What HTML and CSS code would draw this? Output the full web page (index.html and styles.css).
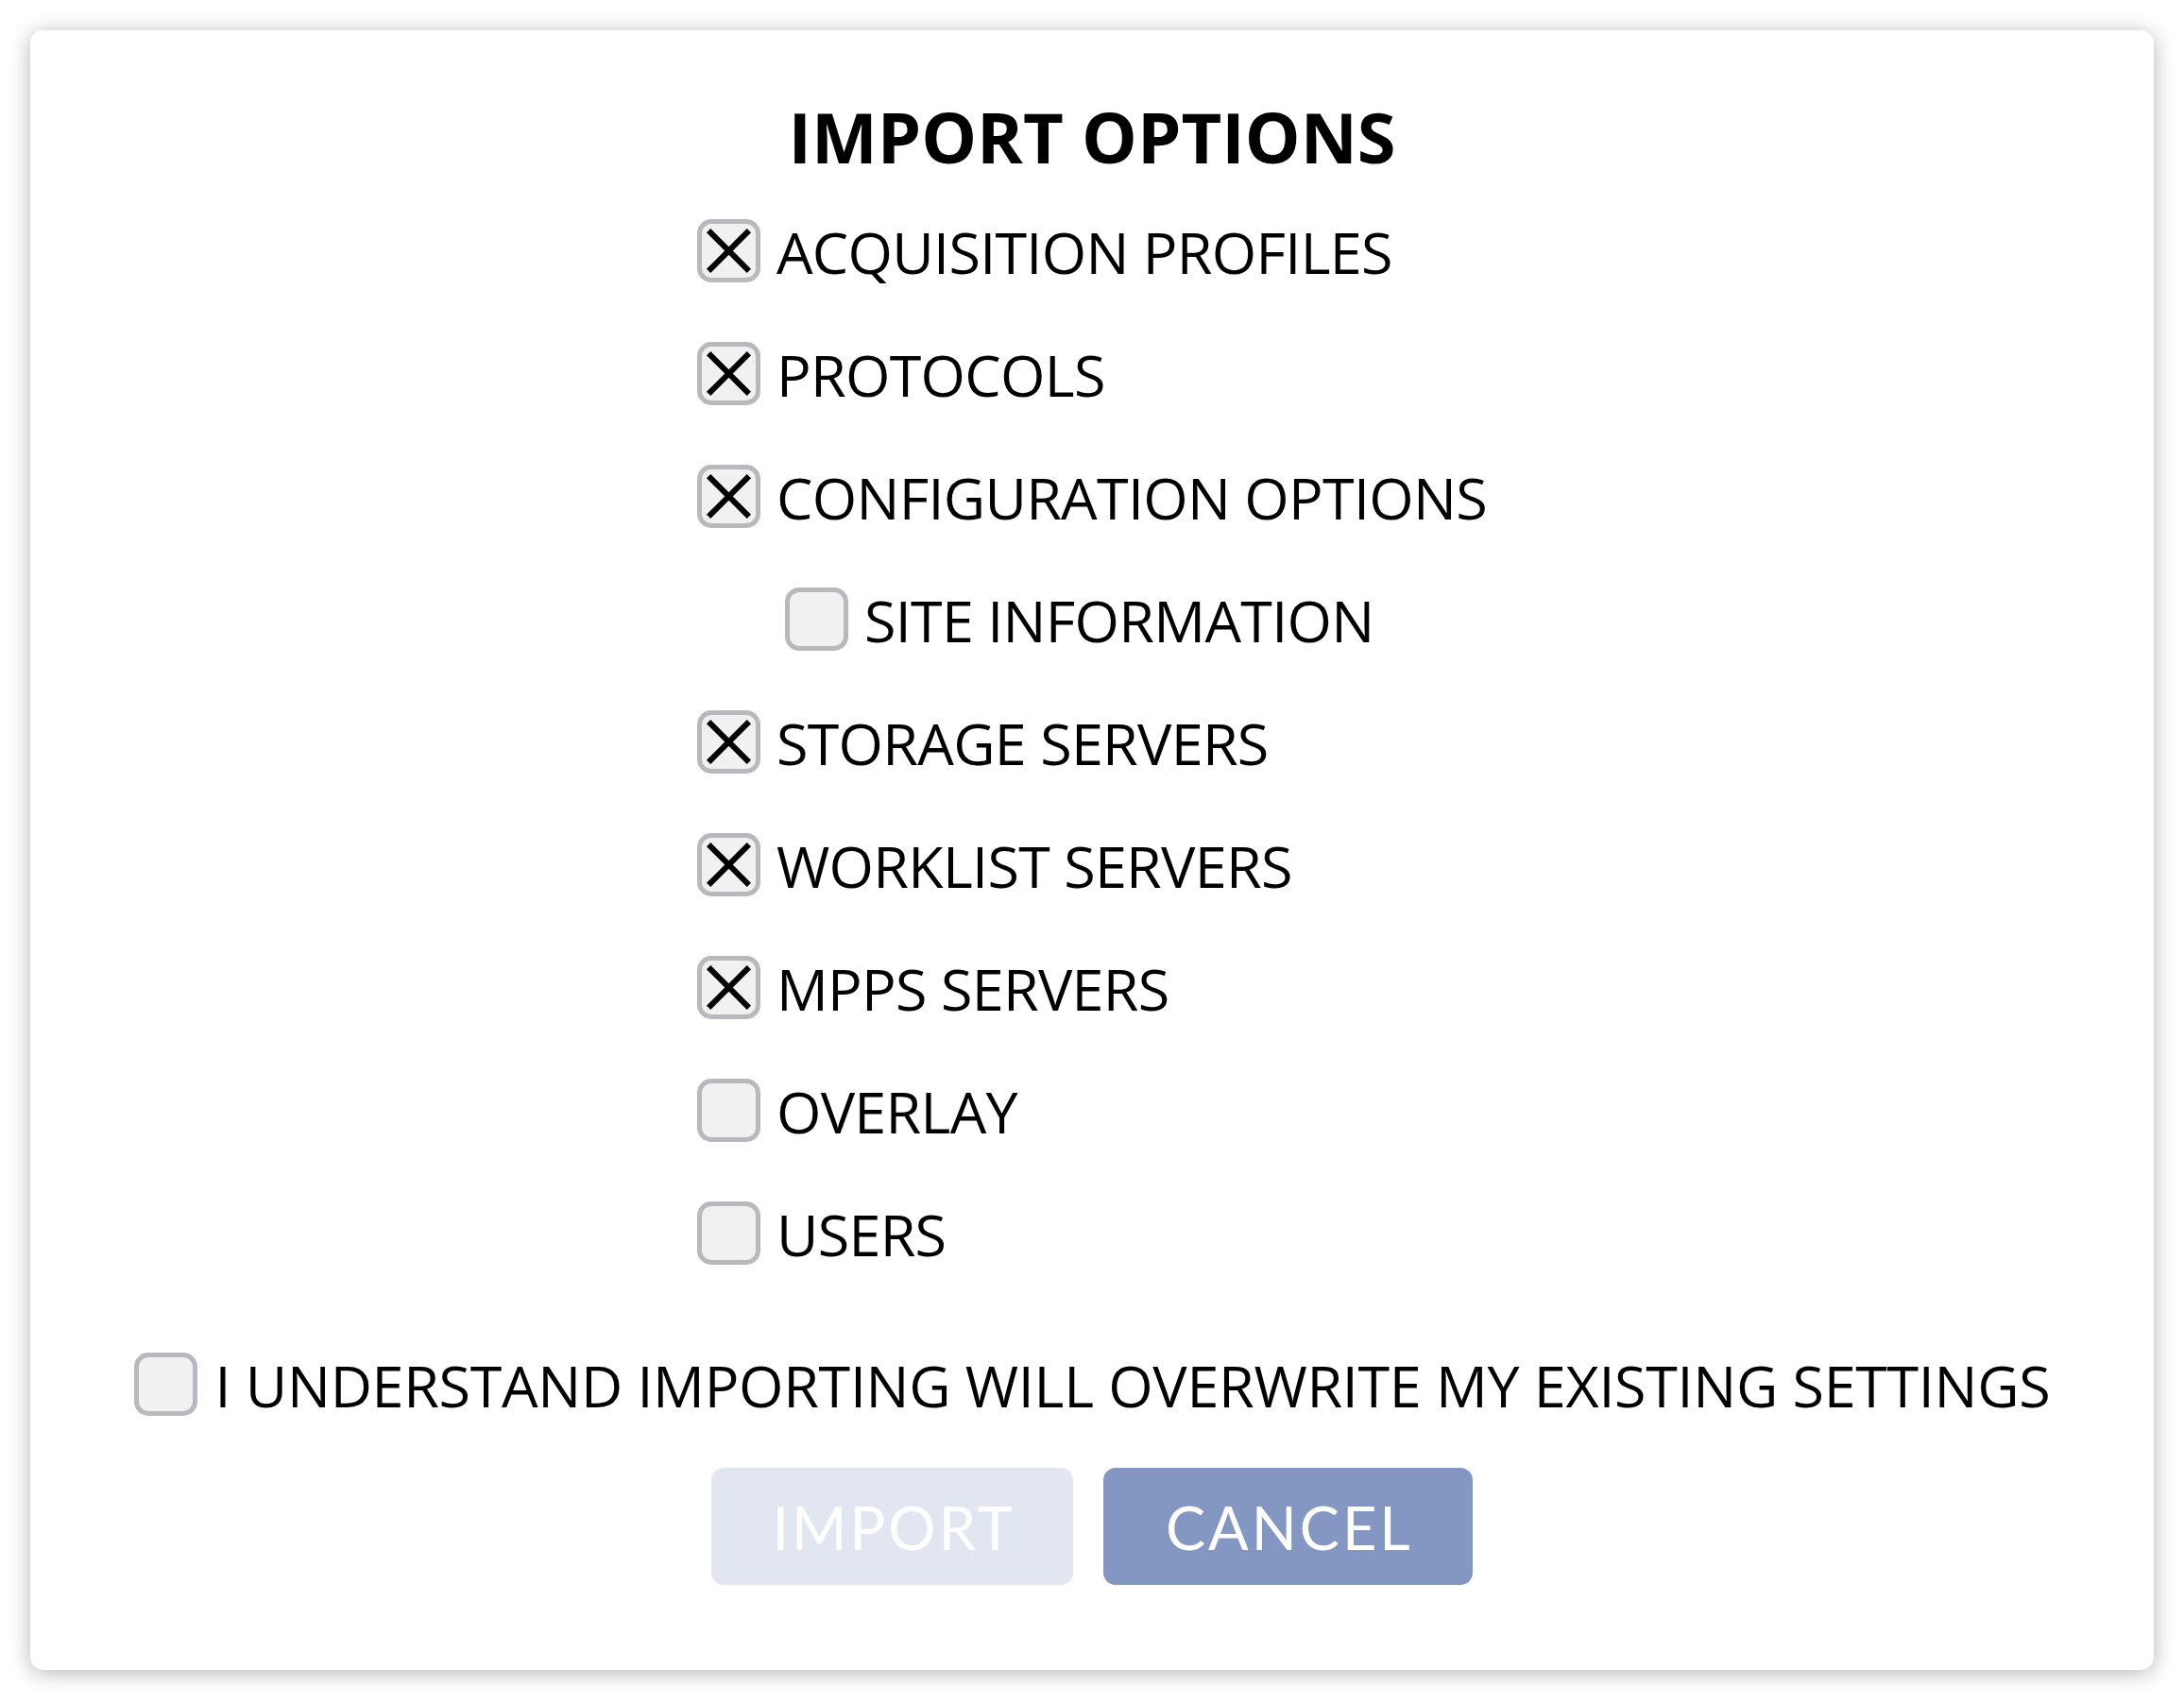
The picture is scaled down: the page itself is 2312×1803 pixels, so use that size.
FILE: index.html
```html
<!DOCTYPE html>
<html lang="en">
<head>
    <meta charset="UTF-8">
    <meta name="viewport" content="width=device-width, initial-scale=1.0">
    <title>Import Options</title>
    <link rel="stylesheet" href="styles.css">
</head>
<body>
    <div class="dialog">
        <h1 class="title">IMPORT OPTIONS</h1>

        <div class="options">
            <label class="option">
                <span class="box"><svg viewBox="0 0 56 56"><path d="M7 7 L49 49 M49 7 L7 49"/></svg></span>
                <span class="text">ACQUISITION PROFILES</span>
            </label>
            <label class="option">
                <span class="box"><svg viewBox="0 0 56 56"><path d="M7 7 L49 49 M49 7 L7 49"/></svg></span>
                <span class="text">PROTOCOLS</span>
            </label>
            <label class="option">
                <span class="box"><svg viewBox="0 0 56 56"><path d="M7 7 L49 49 M49 7 L7 49"/></svg></span>
                <span class="text">CONFIGURATION OPTIONS</span>
            </label>
            <label class="option sub">
                <span class="box"></span>
                <span class="text">SITE INFORMATION</span>
            </label>
            <label class="option">
                <span class="box"><svg viewBox="0 0 56 56"><path d="M7 7 L49 49 M49 7 L7 49"/></svg></span>
                <span class="text">STORAGE SERVERS</span>
            </label>
            <label class="option">
                <span class="box"><svg viewBox="0 0 56 56"><path d="M7 7 L49 49 M49 7 L7 49"/></svg></span>
                <span class="text">WORKLIST SERVERS</span>
            </label>
            <label class="option">
                <span class="box"><svg viewBox="0 0 56 56"><path d="M7 7 L49 49 M49 7 L7 49"/></svg></span>
                <span class="text">MPPS SERVERS</span>
            </label>
            <label class="option">
                <span class="box"></span>
                <span class="text">OVERLAY</span>
            </label>
            <label class="option">
                <span class="box"></span>
                <span class="text">USERS</span>
            </label>
        </div>

        <label class="option confirm">
            <span class="box"></span>
            <span class="text">I UNDERSTAND IMPORTING WILL OVERWRITE MY EXISTING SETTINGS</span>
        </label>

        <div class="actions">
            <button class="btn disabled">IMPORT</button>
            <button class="btn primary">CANCEL</button>
        </div>
    </div>
</body>
</html>
```

FILE: styles.css
```css
* {
    margin: 0;
    padding: 0;
    box-sizing: border-box;
}

body {
    background: #ffffff;
    padding: 32px 32px 35px;
    font-family: 'Open Sans', 'Noto Sans', sans-serif;
    color: #000;
}

.dialog {
    height: 1736px;
    background: #fff;
    border-radius: 14px;
    box-shadow: 0 3px 22px rgba(0, 0, 0, 0.3);
    padding: 76px 0 90px;
    display: flex;
    flex-direction: column;
    align-items: center;
}

.title {
    font-size: 74px;
    line-height: 74px;
    font-weight: 700;
    margin-bottom: 50px;
}

.options {
    display: flex;
    flex-direction: column;
    gap: 64px;
}

.option {
    display: flex;
    align-items: center;
    gap: 17px;
    height: 66px;
}

.option.sub {
    margin-left: 93px;
}

.box {
    flex: none;
    width: 67px;
    height: 67px;
    border: 5px solid #b8b9bd;
    border-radius: 15px;
    background: #f1f1f1;
}

.box svg {
    display: block;
    width: 57px;
    height: 57px;
}

.box path {
    stroke: #000;
    stroke-width: 6;
    fill: none;
}

.text {
    font-size: 61px;
    line-height: 66px;
    letter-spacing: -0.7px;
    padding-top: 4px;
    white-space: nowrap;
}

.confirm {
    margin-top: 94px;
    gap: 19px;
}

.confirm .text {
    letter-spacing: -0.3px;
}

.actions {
    display: flex;
    gap: 32px;
    margin-top: 56px;
}

.btn {
    height: 124px;
    border: none;
    border-radius: 13px;
    font-family: 'Lato', sans-serif;
    font-size: 63px;
    letter-spacing: 3px;
    color: #fff;
    cursor: pointer;
}

.btn.disabled {
    padding: 0 61px 0 64px;
    background: #e1e6f0;
}

.btn.primary {
    padding: 0 63px 0 66px;
    background: #8497c2;
}
```
